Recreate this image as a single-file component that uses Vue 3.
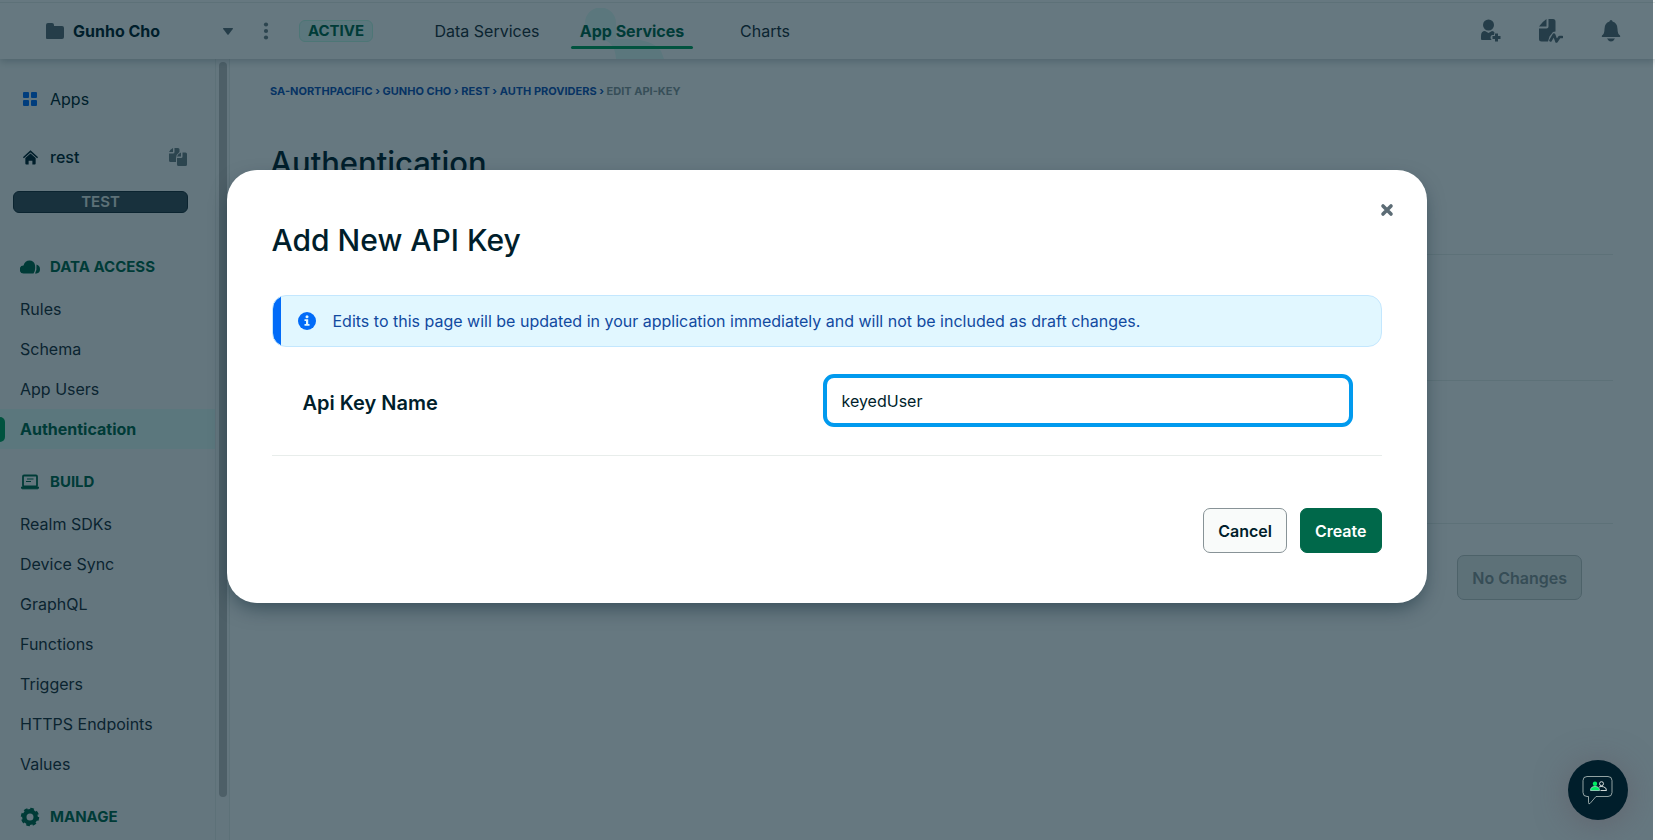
<script setup>
import { ref } from 'vue'

const keyName = ref('keyedUser')

const crumbs = ['SA-NorthPacific', 'Gunho Cho', 'rest', 'Auth Providers']

const sections = [
  {
    title: 'Data Access',
    icon: 'cloud',
    items: ['Rules', 'Schema', 'App Users', 'Authentication'],
  },
  {
    title: 'Build',
    icon: 'laptop',
    items: ['Realm SDKs', 'Device Sync', 'GraphQL', 'Functions', 'Triggers', 'HTTPS Endpoints', 'Values'],
  },
  { title: 'Manage', icon: 'gear', items: [] },
]
</script>

<template>
  <div class="shell">
    <header class="topbar">
      <button class="account" type="button">
        <svg width="18" height="16" viewBox="0 0 18 16" aria-hidden="true">
          <path d="M0 2a2 2 0 0 1 2-2h4a2 2 0 0 1 2 2v1h8a2 2 0 0 1 2 2v9a2 2 0 0 1-2 2H1a1 1 0 0 1-1-1z" fill="#5c6c75" />
        </svg>
        <span class="account-name">Gunho Cho</span>
        <svg width="10" height="7" viewBox="0 0 10 7" aria-hidden="true">
          <path d="M.6 0h8.8q.9.2.4 1L5.600 6.500q-.6.7-1.200 0L.2 1q-.5-.8.4-1z" fill="#5c6c75" />
        </svg>
      </button>
      <button class="dots" type="button" aria-label="More options">
        <svg width="6" height="18" viewBox="0 0 6 18" aria-hidden="true" fill="#6f7f86">
          <circle cx="3" cy="2.500" r="2.100" />
          <circle cx="3" cy="9" r="2.100" />
          <circle cx="3" cy="15.500" r="2.100" />
        </svg>
      </button>
      <span class="active-badge">ACTIVE</span>
      <nav class="tabs">
        <a class="tab" href="#data">Data Services</a>
        <a class="tab current" href="#apps">
          <svg class="blob" width="92" height="51" viewBox="0 0 92 51" aria-hidden="true">
            <path d="M0 15a15.500 15.500 0 0 1 31 0v16h10c16 0 28 3 35 12l3 8H31q-1-16-12-19Q0 32 0 15z" fill="#e3fcf7" />
          </svg>
          <span class="tab-text">App Services</span>
        </a>
        <a class="tab" href="#charts">Charts</a>
      </nav>
      <div class="tools">
        <button type="button" aria-label="Invite user">
          <svg width="20" height="24" viewBox="0 0 20 24" fill="#5c6c75" aria-hidden="true">
            <circle cx="7.500" cy="6" r="5.500" />
            <path d="M0 17q0-5 4-5l3.500 2 3.500-2q2 0 2.500 1.500l-.5 2.500h-2q-1.500.5-1.500 2.500t1.500 2.500H1q-1 0-1-1z" />
            <path d="M15.500 14.500v8M11.500 18.500h8" stroke="#5c6c75" stroke-width="3" />
          </svg>
        </button>
        <button type="button" aria-label="Project activity">
          <svg width="24" height="24" viewBox="0 0 24 24" fill="#5c6c75" aria-hidden="true">
            <path d="M7.500 0v7.500H0Q3 3 7.500 0z" />
            <path d="M9.500 0H14q2.500 0 2.500 2.500v10L14 13l-3.500 4.500L9 22.500H2.500Q0 22.500 0 20V9.500h7.500q2 0 2-2z" />
            <path d="M11.500 21.500l3.500-6 2.500 7 3-4.500h2.500" fill="none" stroke="#5c6c75" stroke-width="2.600" stroke-linecap="round" stroke-linejoin="round" />
          </svg>
        </button>
        <button type="button" aria-label="Notifications">
          <svg width="20" height="22" viewBox="0 0 20 22" fill="#5c6c75" aria-hidden="true">
            <path d="M8.500 1.500a1.500 1.500 0 0 1 3 0Q16.500 3 16.500 9q0 5 2.500 6.500.8 1.500-.5 1.500h-17Q.2 17 1 15.500 3.500 14 3.500 9q0-6 5-7.500zM6 18.500h8q-1.500 3-4 3t-4-3z" />
          </svg>
        </button>
      </div>
    </header>

    <div class="body">
      <aside class="sidebar">
        <a class="side-link" href="#all-apps">
          <svg width="14" height="14" viewBox="0 0 14 14" fill="#016bf8" aria-hidden="true">
            <rect width="6" height="6" rx="1" />
            <rect x="8" width="6" height="6" rx="1" />
            <rect y="8" width="6" height="6" rx="1" />
            <rect x="8" y="8" width="6" height="6" rx="1" />
          </svg>
          Apps
        </a>
        <div class="side-link app-row">
          <svg width="15" height="16" viewBox="0 0 16 16" fill="#001e2b" aria-hidden="true">
            <path d="M1 8.300L8 2l7 6.300" fill="none" stroke="#001e2b" stroke-width="1.700" stroke-linecap="round" />
            <path d="M8 4.300l5.500 4.800V15q0 1-1 1H10v-4H6v4H3.500q-1 0-1-1V9.100z" />
          </svg>
          <a class="app-name" href="#rest">rest</a>
          <button class="copy" type="button" aria-label="Copy app ID">
            <svg width="18" height="18" viewBox="0 0 18 18" fill="#6f7f86" aria-hidden="true">
              <path d="M4 0v4H0Q1 1.500 4 0z" />
              <path d="M5.500 0H9q1.500 0 1.500 1.500V4Q7.500 6 7 10v4H1.500Q0 14 0 12.500V5.500h4q1.500 0 1.500-1.500z" />
              <path d="M12 4.500v4H8q1-3 4-4z" />
              <path d="M13.500 4.500h3q1.500 0 1.500 1.500v10.500q0 1.500-1.500 1.500h-7Q8 18 8 16.500V10h4q1.500 0 1.500-1.500z" />
            </svg>
          </button>
        </div>
        <div class="env">TEST</div>

        <nav v-for="section in sections" :key="section.title" class="section">
          <h2 class="section-title">
            <svg v-if="section.icon === 'cloud'" width="20" height="14" viewBox="0 0 20 14" fill="#00684a" aria-hidden="true">
              <path d="M4 13.500a4 4 0 0 1-.5-8Q5 .5 9.500.5T15 5q.8 5.500-1.500 8.500z" />
              <path d="M16.500 4.500Q20 5.500 20 9.300t-3.500 4.200H15q2-3.500 1.500-9z" />
            </svg>
            <svg v-else-if="section.icon === 'laptop'" width="20" height="16" viewBox="0 0 20 16" fill="none" stroke="#00684a" aria-hidden="true">
              <rect x="3" y="1.500" width="14" height="11" rx="1" stroke-width="1.800" />
              <path d="M7 5h6.500M6 7.500h5" stroke-width="1.200" />
              <path d="M1.500 13h17v1.200q-.3.600-1 .6h-15q-.7 0-1-.6z" fill="#00684a" />
            </svg>
            <svg v-else width="20" height="20" viewBox="0 0 20 20" aria-hidden="true">
              <circle cx="10" cy="10" r="5.700" fill="none" stroke="#00684a" stroke-width="4.400" />
              <circle cx="10" cy="10" r="8" fill="none" stroke="#00684a" stroke-width="2.400" stroke-dasharray="3.600 2.683" />
            </svg>
            {{ section.title }}
          </h2>
          <a
            v-for="item in section.items"
            :key="item"
            href="#section"
            class="item"
            :class="{ selected: item === 'Authentication' }"
          >{{ item }}</a>
        </nav>
      </aside>

      <div class="scroll-lane"><div class="thumb"></div></div>

      <main class="content">
        <nav class="crumbs">
          <template v-for="crumb in crumbs" :key="crumb">
            <a href="#crumb">{{ crumb }}</a><span class="sep"> › </span>
          </template><span>Edit api-key</span>
        </nav>
        <h1 class="page-title">Authentication</h1>
        <div class="panel short"></div>
        <div class="panel"></div>
        <div class="panel tall"></div>
        <div class="page-actions">
          <button class="btn disabled" type="button" disabled>No Changes</button>
        </div>
      </main>
    </div>

    <div class="overlay">
      <form class="modal" role="dialog" aria-labelledby="modal-title" @submit.prevent>
        <button class="close" type="button" aria-label="Close">
          <svg width="14" height="14" viewBox="0 0 14 14" aria-hidden="true">
            <path d="M3 3l8 8M11 3l-8 8" stroke="#5c6c75" stroke-width="3.600" stroke-linecap="round" />
          </svg>
        </button>
        <h2 id="modal-title" class="modal-title">Add New API Key</h2>
        <div class="notice" role="note">
          <svg width="18" height="18" viewBox="0 0 18 18" aria-hidden="true">
            <circle cx="9" cy="9" r="9" fill="#016bf8" />
            <circle cx="9" cy="4.700" r="1.500" fill="#e1f7ff" />
            <path d="M6.500 7.300h3.700V12h1.300v1.700h-5V12H8V9H6.500z" fill="#e1f7ff" />
          </svg>
          <span>Edits to this page will be updated in your application immediately and will not be included as draft changes.</span>
        </div>
        <div class="field">
          <label for="key-name">Api Key Name</label>
          <input id="key-name" v-model="keyName" type="text" />
        </div>
        <div class="modal-actions">
          <button class="btn" type="button">Cancel</button>
          <button class="btn primary" type="submit">Create</button>
        </div>
      </form>
    </div>

    <button class="chat" type="button" aria-label="Open chat">
      <svg width="32" height="30" viewBox="0 0 32 30" fill="none" aria-hidden="true">
        <path d="M5 1.500h21q4 0 4 4v12q0 4-4 4H14L8 28.500q-1.500 1-1.500-1v-6H5q-4 0-4-4v-12q0-4 4-4z" stroke="#b8c4c2" stroke-width=".8" />
        <circle cx="13" cy="8.700" r="2.200" fill="#00ed64" />
        <path d="M8.500 15.500q0-4 4.500-4t4.500 4z" fill="#00ed64" stroke="#e3fcf7" stroke-width=".6" />
        <circle cx="19.500" cy="8.700" r="2" stroke="#e8edeb" stroke-width=".9" />
        <path d="M17 12q2-1 4.500-.2 3 .7 3 3.700h-6" stroke="#e8edeb" stroke-width=".9" />
      </svg>
    </button>
  </div>
</template>

<style>
body {
  margin: 0;
  background: #f4f5f7;
}
</style>

<style scoped>
.shell {
  position: relative;
  display: flex;
  flex-direction: column;
  height: 100vh;
  overflow: hidden;
  background: #fff;
  color: #001e2b;
  font-family: Inter, "Liberation Sans", sans-serif;
  font-size: 16px;
  line-height: 24px;
}
* {
  box-sizing: border-box;
}
button {
  padding: 0;
  border: 0;
  background: none;
  color: inherit;
  font: inherit;
}
a {
  color: inherit;
  text-decoration: none;
}
svg {
  display: block;
  flex: none;
}
.topbar {
  position: relative;
  z-index: 1;
  display: flex;
  flex: none;
  align-items: center;
  height: 59px;
  padding: 3px 34px 0 46px;
  background: #fff linear-gradient(#e8edeb, #e8edeb) 0 2px / 100% 1px no-repeat;
  box-shadow: 0 3px 7px rgba(0, 30, 43, 0.2);
}
.account {
  display: flex;
  align-items: center;
  gap: 9px;
  width: 187px;
  text-align: left;
}
.account-name {
  flex: 1;
  font-weight: 700;
}
.dots {
  margin-left: 30px;
}
.active-badge {
  width: 74px;
  height: 22px;
  margin-left: 30px;
  border: 1px solid #c0fae6;
  border-radius: 6px;
  background: #e3fcf7;
  color: #00684a;
  font-size: 15px;
  font-weight: 700;
  line-height: 20px;
  text-align: center;
}
.tabs {
  display: flex;
  align-self: stretch;
  gap: 22px;
  margin-left: 52px;
}
.tab {
  position: relative;
  display: flex;
  align-items: center;
  justify-content: center;
  min-width: 124px;
  color: #1c2d38;
}
.tab:last-child {
  min-width: 100px;
}
.tab.current {
  min-width: 122px;
  color: #00684a;
  font-weight: 700;
}
.tab.current::after {
  content: "";
  position: absolute;
  right: 0;
  bottom: 10px;
  left: 0;
  height: 3px;
  border-radius: 3px;
  background: #00a35c;
}
.blob {
  position: absolute;
  bottom: 0;
  left: 14px;
}
.tab-text {
  position: relative;
}
.tools {
  display: flex;
  align-items: center;
  gap: 38px;
  margin-left: auto;
}
.body {
  display: flex;
  flex: 1;
  min-height: 0;
}
.sidebar {
  flex: none;
  width: 216px;
  padding-top: 20px;
  overflow: hidden;
  border-right: 1px solid #e8edeb;
  background: #f9fbfa;
}
.side-link {
  display: flex;
  align-items: center;
  gap: 13px;
  height: 40px;
  padding: 0 28px 0 23px;
}
.app-row {
  gap: 12px;
  margin-top: 18px;
  font-weight: 500;
}
.app-name {
  flex: 1;
}
.env {
  height: 22px;
  margin: 14px 27px 0 13px;
  border: 1px solid #1c2d38;
  border-radius: 6px;
  background: #3d4f58;
  color: #e8edeb;
  font-size: 15px;
  font-weight: 600;
  line-height: 20px;
  text-align: center;
}
.section {
  margin-top: 11px;
}
.env + .section {
  margin-top: 32px;
}
.section-title {
  display: flex;
  align-items: center;
  gap: 10px;
  height: 44px;
  margin: 0;
  padding-left: 20px;
  color: #00684a;
  font-size: 15px;
  font-weight: 700;
  text-transform: uppercase;
}
.item {
  display: flex;
  align-items: center;
  height: 40px;
  padding-left: 20px;
  color: #1c2d38;
}
.selected {
  position: relative;
  background: #e3fcf7;
  color: #00684a;
  font-weight: 700;
}
.selected::before {
  content: "";
  position: absolute;
  top: 8px;
  left: 0;
  width: 5px;
  height: 25px;
  border-radius: 0 5px 5px 0;
  background: #00a35c;
}
.scroll-lane {
  flex: none;
  width: 14px;
  padding: 3px 3px 43px;
  border-right: 1px solid #e8edeb;
  background: #fafafa;
}
.thumb {
  width: 8px;
  height: 100%;
  border-radius: 4px;
  background: #c1c1c1;
}
.content {
  flex: 1;
  min-width: 0;
  padding: 20px 42px 0 40px;
}
.crumbs {
  color: #89979b;
  font-size: 11px;
  font-weight: 700;
  text-transform: uppercase;
}
.crumbs a,
.sep {
  color: #1254b7;
}
.page-title {
  margin: 40px 0 0;
  font-size: 31px;
  font-weight: 500;
  line-height: 40px;
}
.panel {
  height: 126px;
  border-bottom: 1px solid #e8edeb;
}
.panel.short {
  height: 72px;
}
.panel.tall {
  height: 143px;
}
.page-actions {
  display: flex;
  justify-content: flex-end;
  padding: 31px 31px 0 0;
}
.btn {
  height: 45px;
  padding: 0 14px;
  border: 1px solid #889397;
  border-radius: 7px;
  background: #f9fbfa;
  font-weight: 600;
}
.btn.primary {
  border-color: #00684a;
  background: #00684a;
  color: #fff;
}
.btn.disabled {
  border-color: #c1c7c6;
  background: #e8edeb;
  color: #889397;
}
.overlay {
  position: absolute;
  z-index: 2;
  inset: 0 2px 0 0;
  display: flex;
  align-items: flex-start;
  justify-content: center;
  padding: 170px 24px 24px;
  background: rgba(0, 30, 43, 0.6);
}
.modal {
  position: relative;
  width: 100%;
  max-width: 1200px;
  padding: 50px 45px;
  border-radius: 30px;
  background: #fff;
  box-shadow: 0 8px 20px -4px rgba(0, 30, 43, 0.5);
}
.close {
  position: absolute;
  top: 33px;
  right: 33px;
}
.modal-title {
  margin: 0;
  font-size: 30px;
  font-weight: 500;
  line-height: 40px;
}
.notice {
  display: flex;
  align-items: center;
  gap: 17px;
  min-height: 52px;
  margin-top: 35px;
  padding: 8px 24px 8px 25px;
  border: 1px solid #c3e7fe;
  border-radius: 14px;
  background: linear-gradient(90deg, #016bf8 9px, #e1f7ff 9px) border-box;
  color: #114a9f;
}
.field {
  display: grid;
  grid-template-columns: 1fr 530px;
  align-items: center;
  padding: 27px 29px 28px 31px;
  border-bottom: 1px solid #e8edeb;
}
.field label {
  padding-top: 4px;
  font-size: 20px;
  font-weight: 600;
}
.field input {
  width: 100%;
  height: 53px;
  padding: 0 15px;
  border: 4px solid #019aee;
  border-radius: 11px;
  outline: 0;
  background: #fff;
  color: #001e2b;
  font: inherit;
}
.modal-actions {
  display: flex;
  justify-content: flex-end;
  gap: 13px;
  margin-top: 52px;
}
.chat {
  position: absolute;
  z-index: 3;
  right: 27px;
  bottom: 20px;
  display: grid;
  place-items: center;
  width: 60px;
  height: 60px;
  border-radius: 50%;
  background: #001e2b;
  box-shadow: 0 4px 32px rgba(92, 80, 90, 0.5);
}
</style>
